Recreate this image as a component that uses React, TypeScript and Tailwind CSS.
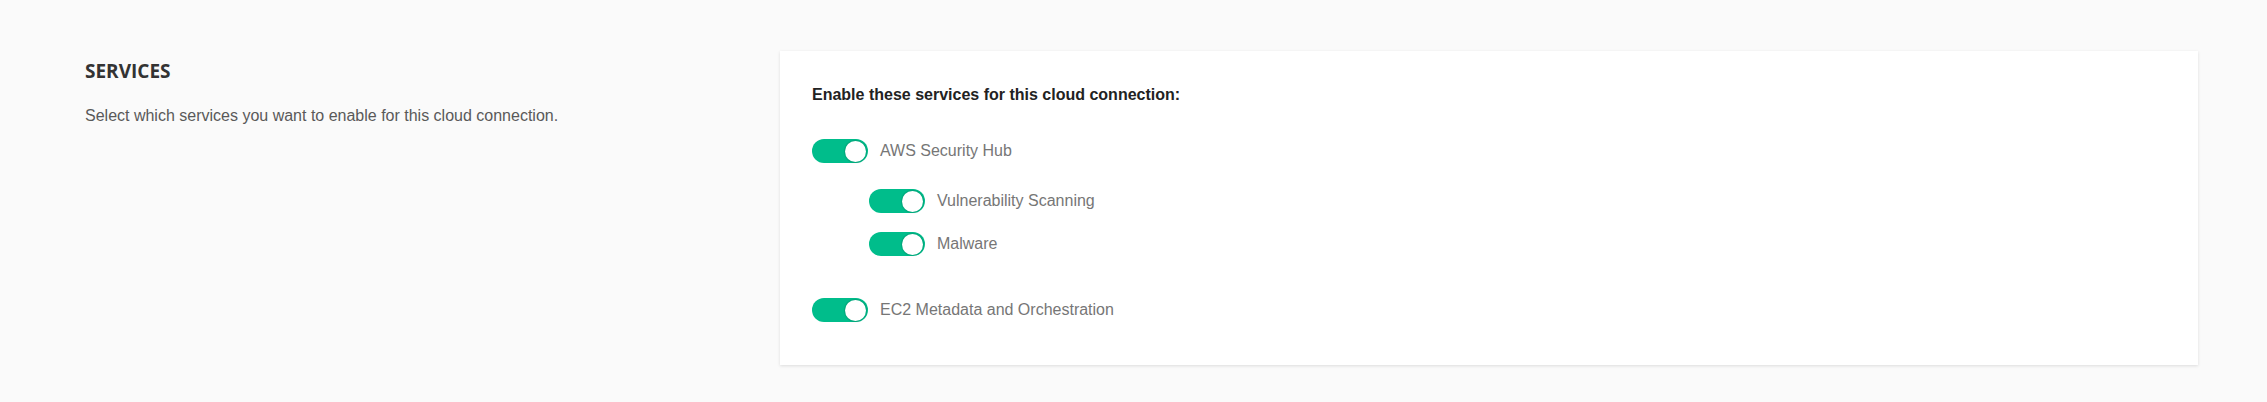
import { useState } from "react";

type ToggleProps = {
  checked: boolean;
  onChange: () => void;
  label: string;
};

const Toggle = ({ checked, onChange, label }: ToggleProps) => {
  return (
    <label className="flex items-center gap-3 cursor-pointer">
      <button
        type="button"
        role="switch"
        aria-checked={checked}
        onClick={onChange}
        className={`flex items-center w-[56px] h-[24px] rounded-full px-[2px] ${
          checked ? "bg-[#00bd8b] justify-end" : "bg-[#d5d5d5] justify-start"
        }`}
      >
        <span className="block w-[21px] h-[21px] rounded-full bg-white shadow-[0_0_1px_1px_rgba(0,0,0,0.12)]"></span>
      </button>
      <span className="text-[16px] leading-6 text-[#767676]">{label}</span>
    </label>
  );
};

export default function App() {
  const [services, setServices] = useState({
    securityHub: true,
    vulnerability: true,
    malware: true,
    ec2: true,
  });

  const flip = (key: keyof typeof services) =>
    setServices((s) => ({ ...s, [key]: !s[key] }));

  return (
    <div className="min-h-[402px] w-full bg-[#fafafa] font-['Liberation_Sans',Arial,sans-serif]">
      <div className="flex pl-[85px] pr-[69px] pt-[51px] pb-[37px]">
        {/* Left description */}
        <div className="w-[695px] shrink-0">
          <h2 className="font-['Open_Sans',sans-serif] font-bold text-[19px] leading-6 text-[#333] mt-[8px]">
            SERVICES
          </h2>
          <p className="mt-[21px] text-[16px] leading-6 text-[#595959]">
            Select which services you want to enable for this cloud connection.
          </p>
        </div>

        {/* Card */}
        <div className="flex-1 bg-white shadow-[0_1px_3px_rgba(0,0,0,0.12)] pl-[32px] pt-[32px] pb-[43px]">
          <div className="text-[16px] leading-6 font-bold text-[#222]">
            Enable these services for this cloud connection:
          </div>

          <div className="mt-8">
            <Toggle
              checked={services.securityHub}
              onChange={() => flip("securityHub")}
              label="AWS Security Hub"
            />
            <div className="ml-[57px] mt-[26px] flex flex-col gap-[19px]">
              <Toggle
                checked={services.vulnerability}
                onChange={() => flip("vulnerability")}
                label="Vulnerability Scanning"
              />
              <Toggle
                checked={services.malware}
                onChange={() => flip("malware")}
                label="Malware"
              />
            </div>
            <div className="mt-[42px]">
              <Toggle
                checked={services.ec2}
                onChange={() => flip("ec2")}
                label="EC2 Metadata and Orchestration"
              />
            </div>
          </div>
        </div>
      </div>
    </div>
  );
}
